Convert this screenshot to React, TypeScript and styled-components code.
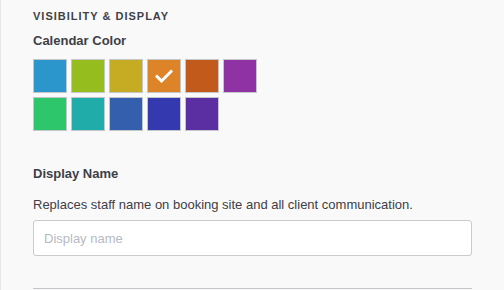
import styled, { createGlobalStyle } from 'styled-components';

const GlobalStyle = createGlobalStyle`
  html, body {
    margin: 0;
    padding: 0;
    background: #f9f9f9;
  }
  body {
    font-family: 'Liberation Sans', Arial, sans-serif;
    color: #3d4046;
  }
`;

const COLORS = [
  '#2b96cc',
  '#96bd1e',
  '#c6ac22',
  '#dd8428',
  '#c25a1c',
  '#8e32a4',
  '#2ec66a',
  '#20adaa',
  '#335fac',
  '#3539af',
  '#5b2fa2',
];

const SELECTED = '#dd8428';

const App = () => {
  return (
    <>
      <GlobalStyle />
      <Panel>
        <SectionTitle>Visibility &amp; Display</SectionTitle>
        <FieldLabel>Calendar Color</FieldLabel>
        <SwatchGrid>
          {COLORS.map((color) => (
            <Swatch key={color} color={color} type="button">
              {color === SELECTED && (
                <svg width="18" height="14" viewBox="0 0 18 14" fill="none">
                  <path
                    d="M2 7.5l4.5 4.5L16 2.5"
                    stroke="#fff"
                    strokeWidth="3"
                    strokeLinecap="square"
                  />
                </svg>
              )}
            </Swatch>
          ))}
        </SwatchGrid>

        <DisplayLabel>Display Name</DisplayLabel>
        <HelpText>
          Replaces staff name on booking site and all client communication.
        </HelpText>
        <TextInput type="text" placeholder="Display name" />
        <Divider />
      </Panel>
    </>
  );
};

const Panel = styled.div`
  box-sizing: border-box;
  height: 290px;
  padding: 8px 32px 0 32px;
  border-left: 1px solid #e6e6e6;
  overflow: hidden;
`;

const SectionTitle = styled.div`
  font-size: 11px;
  line-height: 16px;
  font-weight: 700;
  letter-spacing: 1px;
  text-transform: uppercase;
  color: #3f4247;
`;

const FieldLabel = styled.div`
  margin-top: 8px;
  font-size: 13px;
  line-height: 18px;
  font-weight: 700;
`;

const SwatchGrid = styled.div`
  display: grid;
  grid-template-columns: repeat(6, 34px);
  grid-auto-rows: 34px;
  gap: 4px;
  margin-top: 9px;
`;

const Swatch = styled.button<{ color: string }>`
  display: flex;
  align-items: center;
  justify-content: center;
  box-sizing: border-box;
  width: 34px;
  height: 34px;
  padding: 0;
  border: 1px solid #c3c6ca;
  background: ${({ color }) => color};
  cursor: pointer;
`;

const DisplayLabel = styled(FieldLabel)`
  margin-top: 34px;
`;

const HelpText = styled.div`
  margin-top: 13px;
  font-size: 13px;
  line-height: 18px;
`;

const TextInput = styled.input`
  display: block;
  box-sizing: border-box;
  width: 439px;
  height: 36px;
  margin-top: 6px;
  padding: 0 10px;
  border: 1px solid #c9cbcd;
  border-radius: 3px;
  background: #fff;
  font-family: inherit;
  font-size: 13px;
  color: #3d4046;
  outline: none;

  &::placeholder {
    color: #b6babf;
  }
`;

const Divider = styled.div`
  width: 439px;
  margin-top: 32px;
  border-top: 1px solid #c2c5c9;
`;

export default App;
